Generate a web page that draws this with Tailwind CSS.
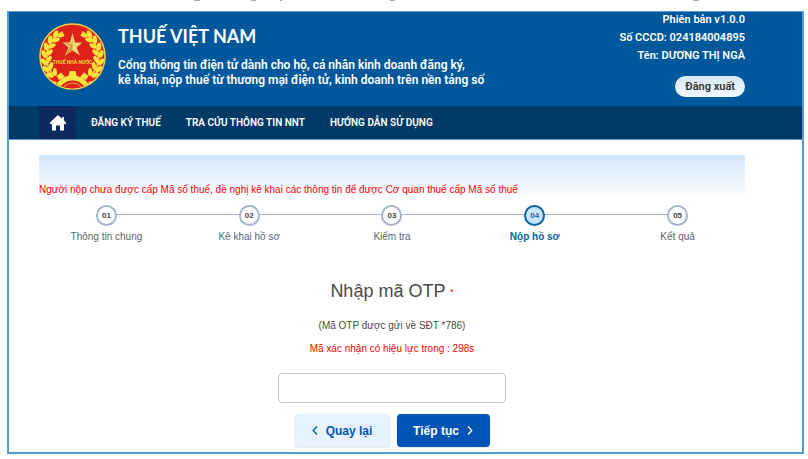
<!DOCTYPE html>
<html lang="vi">
<head>
  <meta charset="UTF-8">
  <meta name="viewport" content="width=device-width, initial-scale=1">
  <title>Thuế Việt Nam</title>
  <script src="https://cdn.jsdelivr.net/npm/@tailwindcss/browser@4"></script>
</head>
<body class="bg-white pl-[7px] pr-1 pb-1 font-['Liberation_Sans',sans-serif] text-[#4a4a4a]">

  <svg class="block h-[11px] w-full" fill="#aaa" aria-hidden="true">
    <rect x="187" width="6" height="1"/>
    <rect x="244" width="5" height="1"/>
    <rect x="273" width="2" height="1"/>
    <rect x="383" width="5" height="1"/>
    <rect x="686" width="6" height="1"/>
  </svg>

  <div class="border-2 border-t border-[#529bd4] pb-[5px]">

    <header class="font-['Roboto',sans-serif] text-white">
      <div class="flex h-[94px] justify-between bg-[#00589c] pl-[30px] pr-[57px]">
        <div class="flex gap-3">
          <svg class="mt-[11px] size-[67px] shrink-0" viewBox="0 0 67 67" role="img" aria-label="Thuế Nhà nước">
            <defs>
              <clipPath id="disc"><circle cx="33.500" cy="33.500" r="32"/></clipPath>
              <g id="ear" fill="#f8e43a">
                <path d="M24 9Q10 16 8 30T15 52" fill="none" stroke="#f0c830" stroke-width="2"/>
                <ellipse cx="7" cy="46" rx="2.200" ry="4" transform="rotate(-50 7 46)"/>
                <ellipse cx="12" cy="43" rx="2" ry="4" transform="rotate(15 12 43)"/>
                <ellipse cx="5" cy="39" rx="2.200" ry="4" transform="rotate(-38 5 39)"/>
                <ellipse cx="10" cy="36.500" rx="2" ry="4" transform="rotate(30 10 36.5)"/>
                <ellipse cx="5" cy="31" rx="2.200" ry="4" transform="rotate(-20 5 31)"/>
                <ellipse cx="10.500" cy="29.500" rx="2" ry="4" transform="rotate(45 10.5 29.5)"/>
                <ellipse cx="7" cy="23.500" rx="2.200" ry="4" transform="rotate(-5 7 23.5)"/>
                <ellipse cx="13" cy="23" rx="2" ry="4" transform="rotate(60 13 23)"/>
                <ellipse cx="11" cy="16.500" rx="2.200" ry="4" transform="rotate(10 11 16.5)"/>
                <ellipse cx="17" cy="17" rx="2" ry="4" transform="rotate(70 17 17)"/>
                <ellipse cx="16.500" cy="11" rx="2.200" ry="4" transform="rotate(28 16.5 11)"/>
                <ellipse cx="22" cy="12.500" rx="1.800" ry="3.500" transform="rotate(78 22 12.5)"/>
                <ellipse cx="11" cy="52" rx="2.200" ry="4" transform="rotate(-60 11 52)"/>
                <ellipse cx="16" cy="49" rx="2" ry="4" transform="rotate(-5 16 49)"/>
              </g>
            </defs>
            <circle cx="33.500" cy="33.500" r="32.500" fill="#de2219" stroke="#f0d24a" stroke-width="1.500"/>
            <use href="#ear"/>
            <use href="#ear" transform="matrix(-1 0 0 1 67 0)"/>
            <path d="M33.500 10 36 19.500 43.500 19.500 37.500 24.500 41 32.500 33.500 27.500 26 32.500 29.500 24.500 23.500 19.500 31 19.500Z" fill="#f3d878"/>
            <path d="M33.500 10V27.500L26 32.500 31.500 23 23.500 19.500 32.500 21Z" fill="#d89a3c"/>
            <g clip-path="url(#disc)" fill="none">
              <circle cx="33.500" cy="72" r="17" stroke="#f8e43a" stroke-width="5" fill="#de2219"/>
              <path d="M29.500 53 30.500 48H36.500L37.500 53ZM20 57 17.500 53 22 49.500 26 54ZM47 57 49.500 53 45 49.500 41 54ZM14 66 9 63 11.500 57.500 18 59ZM53 66 58 63 55.500 57.500 49 59Z" fill="#f8e43a"/>
              <circle cx="33.500" cy="72" r="12" stroke="#f0b030"/>
            </g>
            <text x="33.500" y="41" text-anchor="middle" font-family="Roboto, sans-serif" font-size="5" font-weight="700" fill="#f8d43a">THUẾ NHÀ NƯỚC</text>
          </svg>
          <div>
            <h1 class="mt-3 font-['Lato',sans-serif] text-[18px] leading-6 font-bold">THUẾ VIỆT NAM</h1>
            <p class="mt-[10px] text-[12px] leading-[15px] font-semibold">Cổng thông tin điện tử dành cho hộ, cá nhân kinh doanh đăng ký,<br>kê khai, nộp thuế từ thương mại điện tử, kinh doanh trên nền tảng số</p>
          </div>
        </div>
        <div class="flex flex-col items-end gap-[2px] text-[11px] leading-4 font-semibold whitespace-nowrap">
          <p>Phiên bản v1.0.0</p>
          <p>Số CCCD: 024184004895</p>
          <p>Tên: DƯƠNG THỊ NGÀ</p>
          <button type="button" class="mt-[10px] h-[21px] rounded-full bg-linear-to-b from-[#d6e8f8] to-[#f4f9fe] px-[10px] text-[11px] text-[#333]">Đăng xuất</button>
        </div>
      </div>

      <nav class="flex h-[34px] items-center gap-[25px] border-b border-[#6593b5] bg-[#003a66] pl-[30px] text-[10px] font-semibold whitespace-nowrap">
        <a href="#" aria-label="Trang chủ" class="-mr-[10px] flex h-full w-[37px] items-center justify-center bg-[#0d2a5e]">
          <svg class="size-4" viewBox="0 0 16 16" fill="#fff"><path d="M8 0 0 7.500V9H2V15.500H6V10.500H10V15.500H14V9H16V7.500L14 5.600V2H12V3.700Z"/></svg>
        </a>
        <a href="#">ĐĂNG KÝ THUẾ</a>
        <a href="#">TRA CỨU THÔNG TIN NNT</a>
        <a href="#">HƯỚNG DẪN SỬ DỤNG</a>
      </nav>
    </header>

    <main class="pl-[30px] pr-[57px] pt-[15px]">
      <div class="h-[45px] bg-linear-to-b from-[#d3e7f8] to-white pt-[27px]">
        <p class="text-[10px] leading-4 whitespace-nowrap text-[#ff0000]">Người nộp chưa được cấp Mã số thuế, đề nghị kê khai các thông tin để được Cơ quan thuế cấp Mã số thuế</p>
      </div>

      <ol class="relative -mx-1 mt-[5px] grid grid-cols-5 text-center text-[10px] text-[#5b6673]">
        <li class="absolute inset-x-[10%] top-[9px] h-px bg-[#aab4c3]" aria-hidden="true"></li>
        <li class="relative flex flex-col items-center gap-[3px]">
          <span class="flex size-[21px] items-center justify-center rounded-full border-2 border-[#a9b3c9] bg-white text-[8px] font-bold text-[#444]">01</span>
          <span class="leading-4">Thông tin chung</span>
        </li>
        <li class="relative flex flex-col items-center gap-[3px]">
          <span class="flex size-[21px] items-center justify-center rounded-full border-2 border-[#a9b3c9] bg-white text-[8px] font-bold text-[#444]">02</span>
          <span class="leading-4">Kê khai hồ sơ</span>
        </li>
        <li class="relative flex flex-col items-center gap-[3px]">
          <span class="flex size-[21px] items-center justify-center rounded-full border-2 border-[#a9b3c9] bg-white text-[8px] font-bold text-[#444]">03</span>
          <span class="leading-4">Kiểm tra</span>
        </li>
        <li class="relative flex flex-col items-center gap-[3px]" aria-current="step">
          <span class="flex size-[21px] items-center justify-center rounded-full border-2 border-[#0e62a5] bg-[#c9e5fc] text-[8px] font-bold text-[#33658f]">04</span>
          <span class="leading-4 font-bold text-[#0e62a5]">Nộp hồ sơ</span>
        </li>
        <li class="relative flex flex-col items-center gap-[3px]">
          <span class="flex size-[21px] items-center justify-center rounded-full border-2 border-[#a9b3c9] bg-white text-[8px] font-bold text-[#444]">05</span>
          <span class="leading-4">Kết quả</span>
        </li>
      </ol>

      <form class="mt-[34px] flex flex-col items-center">
        <label for="otp" class="text-[18px] leading-6">Nhập mã OTP <span class="align-middle text-[9px] text-[#ff0000]">*</span></label>
        <p class="mt-[14px] text-[10px] leading-4">(Mã OTP được gửi về SĐT *786)</p>
        <p class="mt-[7px] text-[10px] leading-4 text-[#ff0000]">Mã xác nhận có hiệu lực trong : 298s</p>
        <input id="otp" type="text" inputmode="numeric" class="mt-4 h-[30px] w-[228px] rounded border border-[#c8c8c8] px-2 text-center text-sm">
        <div class="mt-[11px] flex gap-[7px] text-[12px] font-bold whitespace-nowrap">
          <button type="button" class="flex h-[33px] w-[95px] items-center justify-center gap-2 rounded bg-[#e6f2ff] text-[#0054b4] shadow-sm">
            <svg class="h-[9px] w-[6px]" viewBox="0 0 6 9" fill="none" stroke="currentColor" stroke-width="1.300"><path d="M5 .5 1.200 4.500 5 8.500"/></svg>
            Quay lại
          </button>
          <button type="submit" class="flex h-[33px] w-[93px] items-center justify-center gap-2 rounded bg-[#0054b4] text-white shadow-sm">
            Tiếp tục
            <svg class="h-[9px] w-[6px]" viewBox="0 0 6 9" fill="none" stroke="currentColor" stroke-width="1.300"><path d="M1 .5 4.800 4.500 1 8.500"/></svg>
          </button>
        </div>
      </form>
    </main>
  </div>

</body>
</html>
